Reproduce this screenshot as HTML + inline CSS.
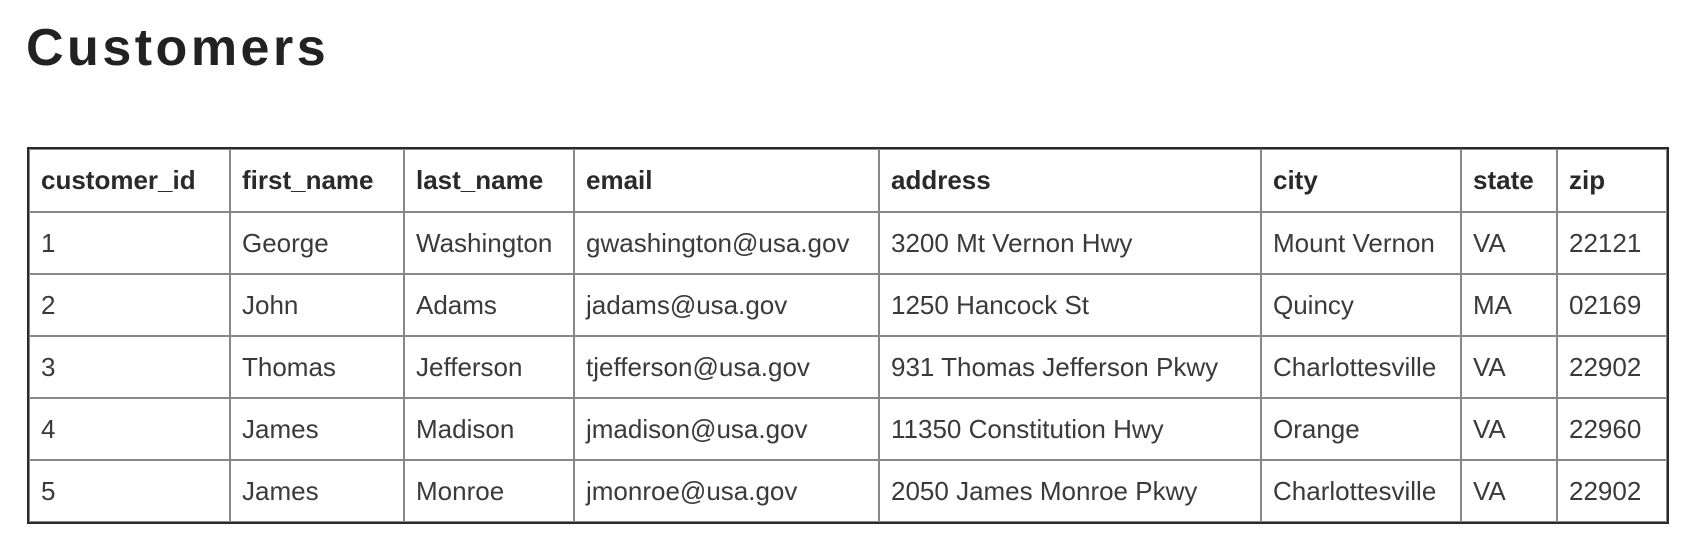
<!DOCTYPE html>
<html><head><style>
html,body{margin:0;padding:0;background:#fff;width:1698px;height:558px;overflow:hidden}
h1{position:absolute;left:26px;top:13px;margin:0;font:bold 52px "Liberation Sans",sans-serif;letter-spacing:3.5px;color:#222;line-height:70px}
table{position:absolute;left:28px;top:148px;border-collapse:collapse;table-layout:fixed;outline:2px solid #2a2a2a;outline-offset:-1px;font-family:"Liberation Sans",sans-serif;color:#3a3a3a}
td,th{border:2px solid #888;padding:0 0 0 11px;text-align:left;height:60px;font-size:26px;white-space:nowrap;overflow:hidden}
th{font-weight:bold;height:61px;color:#2a2a2a}
td{font-weight:normal}
</style></head><body>
<h1>Customers</h1>
<table>
<colgroup><col style="width:201px"><col style="width:174px"><col style="width:170px"><col style="width:305px"><col style="width:382px"><col style="width:200px"><col style="width:96px"><col style="width:110px"></colgroup>
<tr><th>customer_id</th><th>first_name</th><th>last_name</th><th>email</th><th>address</th><th>city</th><th>state</th><th>zip</th></tr>
<tr><td>1</td><td>George</td><td>Washington</td><td>gwashington@usa.gov</td><td>3200 Mt Vernon Hwy</td><td>Mount Vernon</td><td>VA</td><td>22121</td></tr>
<tr><td>2</td><td>John</td><td>Adams</td><td>jadams@usa.gov</td><td>1250 Hancock St</td><td>Quincy</td><td>MA</td><td>02169</td></tr>
<tr><td>3</td><td>Thomas</td><td>Jefferson</td><td>tjefferson@usa.gov</td><td>931 Thomas Jefferson Pkwy</td><td>Charlottesville</td><td>VA</td><td>22902</td></tr>
<tr><td>4</td><td>James</td><td>Madison</td><td>jmadison@usa.gov</td><td>11350 Constitution Hwy</td><td>Orange</td><td>VA</td><td>22960</td></tr>
<tr><td>5</td><td>James</td><td>Monroe</td><td>jmonroe@usa.gov</td><td>2050 James Monroe Pkwy</td><td>Charlottesville</td><td>VA</td><td>22902</td></tr>
</table>
</body></html>
